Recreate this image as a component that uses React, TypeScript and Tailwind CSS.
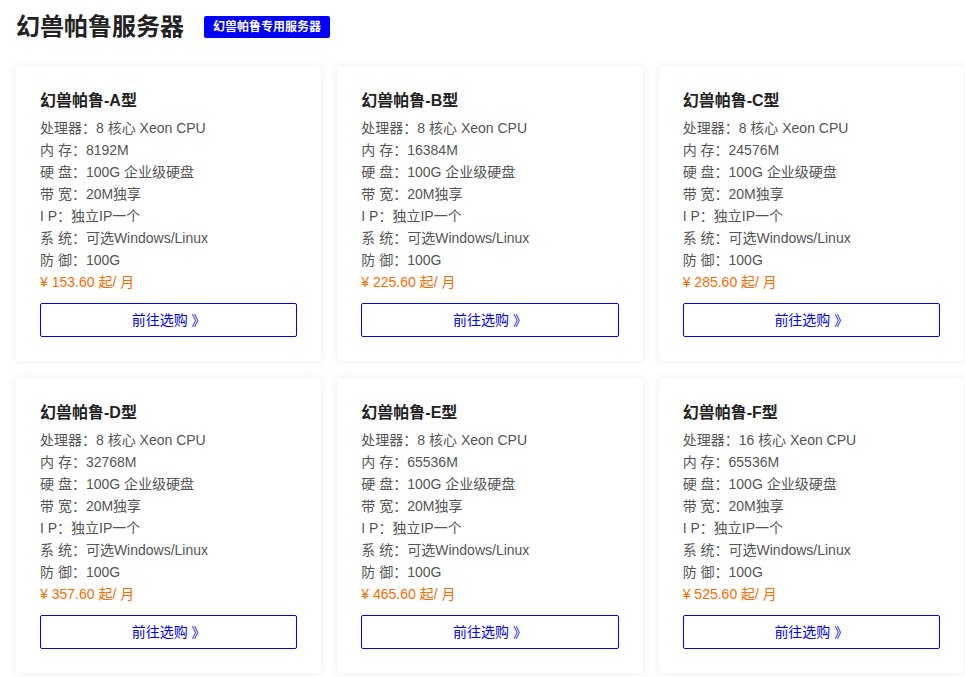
const plans = [
  { name: '幻兽帕鲁-A型', cpu: '8', mem: '8192M', price: '153.60' },
  { name: '幻兽帕鲁-B型', cpu: '8', mem: '16384M', price: '225.60' },
  { name: '幻兽帕鲁-C型', cpu: '8', mem: '24576M', price: '285.60' },
  { name: '幻兽帕鲁-D型', cpu: '8', mem: '32768M', price: '357.60' },
  { name: '幻兽帕鲁-E型', cpu: '8', mem: '65536M', price: '465.60' },
  { name: '幻兽帕鲁-F型', cpu: '16', mem: '65536M', price: '525.60' },
]

function PlanCard({ plan }: { plan: (typeof plans)[number] }) {
  const rows = [
    `处理器：${plan.cpu} 核心 Xeon CPU`,
    `内 存：${plan.mem}`,
    '硬 盘：100G 企业级硬盘',
    '带 宽：20M独享',
    'I P：独立IP一个',
    '系 统：可选Windows/Linux',
    '防 御：100G',
  ]
  return (
    <div className="bg-white rounded-[3px] shadow-[0_0_10px_rgba(0,0,0,0.08)] px-6 pt-6 pb-6">
      <h3 className="text-[16px] leading-[22px] font-bold text-[#222] mb-[5px]">{plan.name}</h3>
      <div className="text-[14px] leading-[22px] text-[#555]">
        {rows.map((r) => (
          <p key={r}>{r}</p>
        ))}
        <p className="text-[#ff6a00]">¥ {plan.price} 起/ 月</p>
      </div>
      <button className="mt-[10px] w-full h-[34px] border border-[#0000ff] rounded-[2px] text-[#0000ff] text-[14px] bg-white">
        前往选购 》
      </button>
    </div>
  )
}

export default function App() {
  return (
    <div
      className="min-h-screen bg-white pl-4 pr-px pt-[10px]"
      style={{ fontFamily: '"Liberation Sans", "Noto Sans CJK SC", sans-serif' }}
    >
      <div className="flex items-center h-[33px]">
        <h1 className="text-[24px] font-bold text-[#222]">幻兽帕鲁服务器</h1>
        <span className="ml-5 bg-[#0000ff] text-white text-[12px] font-bold px-[9px] leading-[22px] rounded-[2px]">
          幻兽帕鲁专用服务器
        </span>
      </div>
      <div className="grid grid-cols-3 gap-x-4 gap-y-[17px] mt-[23px]">
        {plans.map((p) => (
          <PlanCard key={p.name} plan={p} />
        ))}
      </div>
    </div>
  )
}
